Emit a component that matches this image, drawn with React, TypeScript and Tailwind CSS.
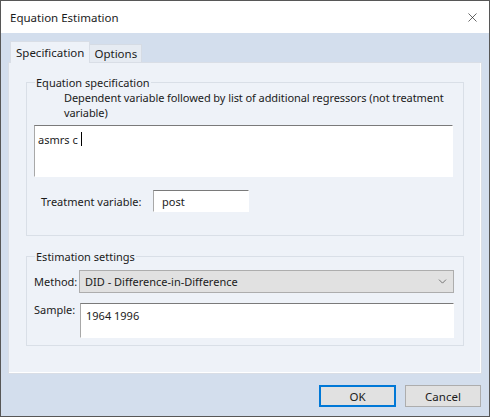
import { ChevronDown, X } from "lucide-react";

const font = { fontFamily: '"Noto Sans", "Open Sans", sans-serif' };

function SunkenBox({ className, children }: { className: string; children?: React.ReactNode }) {
  return (
    <div
      className={
        "border-t border-l border-r border-b border-t-[#7a7a7a] border-l-[#a8a8a8] border-r-white border-b-white bg-white " +
        className
      }
    >
      {children}
    </div>
  );
}

export default function App() {
  return (
    <div
      className="flex h-[417px] w-[490px] flex-col border border-[#575757] bg-[#d3deed] text-[11px] leading-[15px] text-[#1b1b1b]"
      style={font}
    >
      {/* title bar */}
      <div className="flex h-[32px] shrink-0 items-center justify-between bg-white pl-[9px] pr-[9px]">
        <span className="text-[11.5px]">Equation Estimation</span>
        <X className="h-[15px] w-[15px] text-[#222]" strokeWidth={1.1} />
      </div>

      <div className="flex flex-1 flex-col px-[7px] pt-[8px]">
        {/* tabs */}
        <div className="relative z-10 flex h-[21px] items-end pl-[2px]">
          <div className="-mb-px flex h-[22px] items-center border border-b-0 border-[#d9dee6] bg-[#eef2f8] px-[5px] text-[11.5px]">
            Specification
          </div>
          <div className="flex h-[18px] items-center border border-l-0 border-b-0 border-[#d5dbe4] bg-[#e6ebf2] px-[4px] text-[11.5px]">
            Options
          </div>
        </div>

        {/* panel */}
        <div className="flex h-[312px] flex-col border border-[#d9dee6] bg-[#eef2f8] px-[17px] pt-[12px] shadow-[inset_-1px_-1px_0_#fff]">
          <fieldset className="h-[161px] border border-[#d9dfe7] pl-[7px] pr-[8px]">
            <legend className="ml-[1px] px-[1px]">Equation specification</legend>
            <div className="whitespace-nowrap pl-[30px] leading-[15px] tracking-[-0.08px]">
              Dependent variable followed by list of additional regressors (not treatment
              <br />
              variable)
            </div>
            <SunkenBox className="mt-[5px] h-[52px] w-[419px] px-[3px] pt-[4px]">
              <span>asmrs c</span>
              <span className="ml-[3px] inline-block h-[14px] w-px translate-y-[2px] bg-black" />
            </SunkenBox>
            <div className="mt-[13px] flex items-center">
              <span className="ml-[7px] w-[112px]">Treatment variable:</span>
              <SunkenBox className="flex h-[22px] w-[96px] items-center pl-[8px]">post</SunkenBox>
            </div>
          </fieldset>

          <fieldset className="mt-[13px] h-[97px] border border-[#d9dfe7] pl-[7px] pr-[9px]">
            <legend className="ml-[1px] px-[1px]">Estimation settings</legend>
            <div className="mt-[6px] flex items-center">
              <span className="w-[45px]">Method:</span>
              <div className="flex h-[23px] flex-1 items-center justify-between border border-[#adadad] bg-[#e1e1e1] pl-[5px] pr-[4px]">
                <span>DID - Difference-in-Difference</span>
                <ChevronDown className="h-[13px] w-[13px] text-[#555]" strokeWidth={1.4} />
              </div>
            </div>
            <div className="mt-[10px] flex items-start">
              <span className="-mt-[1px] w-[46px]">Sample:</span>
              <SunkenBox className="h-[35px] flex-1 px-[5px] pt-[4px]">1964 1996</SunkenBox>
            </div>
          </fieldset>
        </div>

        {/* buttons */}
        <div className="mt-[11px] flex justify-end gap-[9px] pr-[1px]">
          <button className="h-[22px] w-[77px] border-2 border-[#0078d7] bg-[#e1e1e1] text-[11.5px]">OK</button>
          <button className="h-[22px] w-[76px] border border-[#adadad] bg-[#e1e1e1] text-[11.5px]">Cancel</button>
        </div>
      </div>
    </div>
  );
}
